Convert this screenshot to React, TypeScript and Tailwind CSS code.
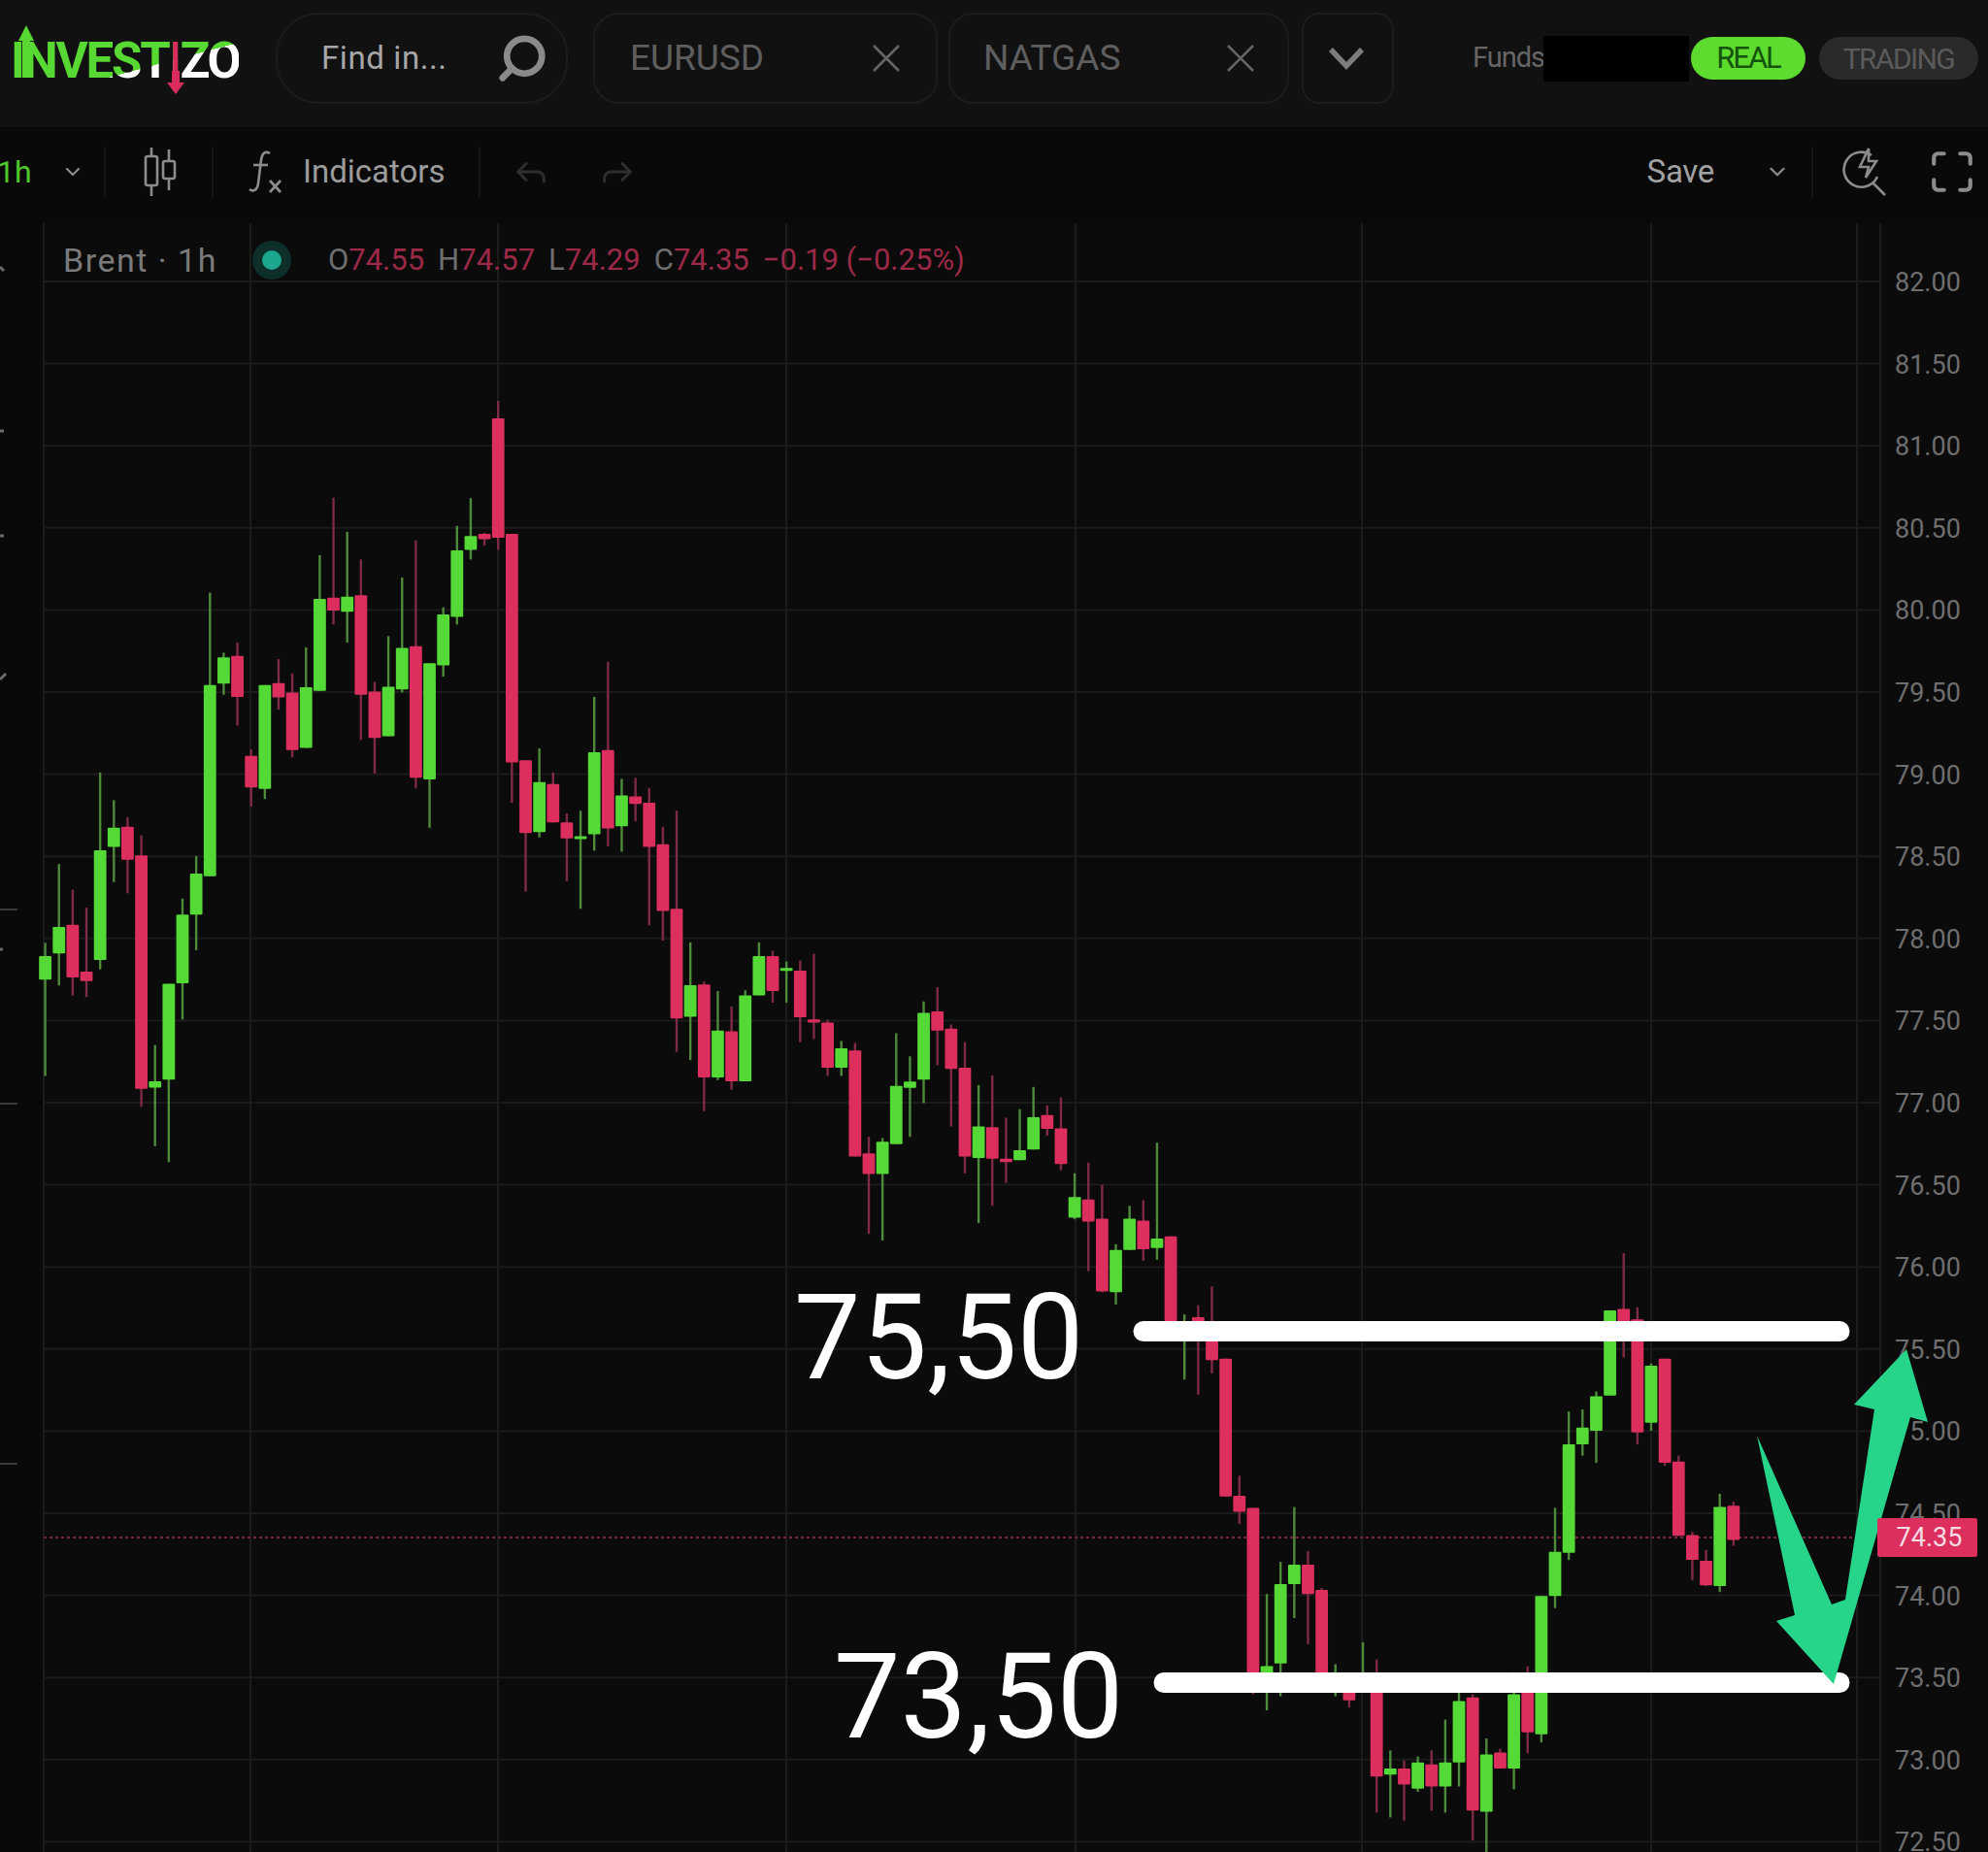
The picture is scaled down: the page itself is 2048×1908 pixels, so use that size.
import { ChevronDown, Forward, Maximize, Reply, Search } from 'lucide-react';

type Candle = [up: 0 | 1, wickTop: number, bodyTop: number, bodyBottom: number, wickBottom: number];

// ── Candles, read off the picture in three stretches, each with its own origin/scale
const LEFT: Candle[] = [
  [1, 1078, 1103, 1147, 1328], [1, 930, 1048, 1098, 1158], [0, 978, 1044, 1143, 1177], [0, 1012, 1132, 1150, 1180],
  [1, 758, 904, 1110, 1128], [1, 810, 862, 898, 964], [0, 842, 860, 922, 985], [0, 876, 914, 1352, 1386],
  [1, 1270, 1338, 1350, 1460], [1, 1155, 1155, 1335, 1490], [1, 995, 1025, 1154, 1222], [1, 915, 948, 1025, 1092],
  [1, 420, 594, 953, 953], [1, 533, 542, 591, 612], [0, 514, 539, 616, 670], [0, 715, 727, 786, 822],
  [1, 594, 594, 789, 808], [0, 545, 590, 617, 640], [0, 572, 608, 716, 730], [1, 523, 598, 712, 712],
  [1, 350, 432, 605, 605], [0, 242, 430, 454, 480], [1, 306, 428, 456, 514], [0, 358, 425, 612, 697],
  [0, 588, 606, 693, 760], [1, 502, 597, 690, 690], [1, 392, 524, 602, 608], [0, 322, 521, 768, 788],
  [1, 553, 553, 771, 862], [1, 448, 461, 557, 578], [1, 295, 341, 466, 480], [1, 243, 314, 340, 358],
  [0, 308, 310, 320, 332], [0, 60, 93, 317, 340], [0, 310, 310, 739, 815], [0, 735, 735, 872, 982],
  [1, 713, 776, 870, 880], [0, 758, 780, 852, 852], [0, 835, 852, 882, 962], [1, 830, 878, 882, 1014],
  [1, 616, 720, 874, 905], [0, 550, 716, 863, 897], [1, 770, 801, 859, 907], [0, 768, 803, 817, 850],
  [0, 787, 815, 898, 1045], [0, 860, 893, 1018, 1074], [0, 830, 1014, 1220, 1283],
];

const MID: Candle[] = [
  [1, 78, 190, 272, 385], [0, 180, 188, 430, 518], [1, 205, 308, 430, 437], [0, 245, 310, 440, 462],
  [1, 203, 216, 440, 440], [1, 78, 114, 216, 216], [0, 100, 114, 205, 235], [1, 128, 145, 150, 235],
  [0, 125, 152, 273, 338], [0, 108, 279, 287, 330], [0, 280, 287, 405, 426], [1, 335, 354, 405, 426],
  [0, 340, 360, 636, 636], [0, 585, 628, 682, 838], [1, 588, 598, 682, 855], [1, 315, 452, 604, 604],
  [1, 375, 441, 457, 585], [1, 232, 262, 436, 497], [0, 195, 258, 308, 398], [0, 292, 303, 408, 558],
  [0, 338, 405, 636, 680], [1, 450, 558, 640, 810], [0, 425, 560, 642, 765], [0, 535, 642, 651, 705],
  [1, 513, 620, 646, 646], [1, 455, 534, 618, 618], [0, 503, 528, 564, 582], [0, 482, 563, 656, 672],
  [1, 680, 742, 796, 800], [0, 652, 748, 806, 935], [0, 710, 798, 988, 990], [1, 865, 880, 990, 1022],
  [1, 765, 798, 880, 880], [0, 750, 803, 878, 908], [1, 600, 850, 875, 905],
];

const RIGHT: Candle[] = [
  [0, 33, 33, 270, 270], [1, 228, 260, 280, 390], [0, 205, 235, 290, 428], [0, 158, 250, 342, 375],
  [0, 338, 338, 682, 682], [0, 630, 680, 720, 750], [0, 710, 710, 1140, 1175], [1, 925, 1105, 1150, 1215],
  [1, 845, 900, 1098, 1180], [1, 708, 852, 900, 985], [0, 818, 852, 925, 1050], [0, 910, 915, 1125, 1125],
  [1, 1100, 1125, 1140, 1180], [0, 1130, 1150, 1190, 1208], [1, 1045, 1125, 1135, 1165], [0, 1088, 1125, 1380, 1470],
  [1, 1315, 1360, 1375, 1482], [0, 1340, 1360, 1400, 1490], [1, 1330, 1345, 1410, 1418], [0, 1315, 1350, 1405, 1465],
  [1, 1238, 1345, 1405, 1470], [1, 1165, 1192, 1345, 1405], [0, 1175, 1183, 1465, 1540], [1, 1285, 1325, 1468, 1568],
  [0, 1310, 1320, 1360, 1360], [1, 1120, 1175, 1360, 1412], [0, 1105, 1125, 1270, 1322], [1, 930, 930, 1275, 1295],
  [1, 710, 820, 930, 960], [1, 470, 552, 822, 840], [1, 465, 510, 552, 580], [1, 420, 432, 518, 598],
  [1, 218, 218, 430, 430], [0, 75, 214, 250, 335], [0, 210, 240, 522, 552], [1, 350, 356, 498, 518],
  [0, 338, 338, 598, 605], [0, 580, 595, 780, 780], [0, 770, 778, 840, 890], [0, 815, 842, 903, 905],
  [1, 675, 708, 905, 920], [0, 695, 705, 790, 805],
];

const fit = (rows: Candle[], origin: number, scale: number): Candle[] =>
  rows.map(([up, a, b, c, d]) => [up, origin + a / scale, origin + b / scale, origin + c / scale, origin + d / scale]);

const CANDLES = [...fit(LEFT, 380, 1.823), ...fit(MID, 940, 2.53), ...fit(RIGHT, 1260, 2.42)];

const PRICES = ['82.00', '81.50', '81.00', '80.50', '80.00', '79.50', '79.00', '78.50', '78.00', '77.50', '77.00', '76.50', '76.00', '75.50', '75.00', '74.50', '74.00', '73.50', '73.00', '72.50'];
const GRID_X = [45, 258, 513, 810, 1108, 1403, 1701, 1913];

function CloseIcon() {
  return (
    <svg width="30" height="30" viewBox="0 0 30 30" className="text-[#666666]">
      <path d="M2 2 28 28M28 2 2 28" stroke="currentColor" strokeWidth="2.6" />
    </svg>
  );
}

function Tab({ label, className }: { label: string; className: string }) {
  return (
    <div className={`${className} h-[94px] flex items-center justify-between rounded-[26px] border-2 border-[#1c1c1c]`}>
      <span className="text-[37px] text-[#5e5e5e] font-normal">{label}</span>
      <CloseIcon />
    </div>
  );
}

function Logo() {
  return (
    <div className="relative w-[270px] h-[94px] shrink-0">
      <svg width="30" height="60" viewBox="0 0 30 60" className="absolute left-[1px] top-[13px]">
        <path d="M12 0 20 16H16V54H8V16H4Z" fill="#58d832" />
      </svg>
      <span className="absolute -left-[3px] top-[20px] text-[51px] leading-[60px] font-bold tracking-[-2.2px] text-transparent bg-clip-text bg-[linear-gradient(165deg,#58d832_0%,#58d832_60%,#ffffff_60%,#ffffff_100%)]">
        INVEST<span className="text-[#d92c5c] font-normal">I</span>ZO
      </span>
      <svg width="20" height="24" viewBox="0 0 20 24" className="absolute left-[157px] top-[60px]">
        <path d="M6 0H14V12H19L10 24 1 12H6Z" fill="#d92c5c" />
      </svg>
    </div>
  );
}

function Header() {
  return (
    <header className="h-[131px] bg-[#111112] flex items-center pl-[14px] pb-[11px]">
      <Logo />
      <div className="w-[301px] h-[94px] flex items-center justify-between pl-[45px] pr-[18px] rounded-[44px] border-2 border-[#1c1c1c]">
        <span className="text-[33px] text-[#a6a6a6] tracking-[0.6px]">Find in...</span>
        <Search size={54} strokeWidth={3} className="-scale-x-100 text-[#8a8a8a]" />
      </div>
      <Tab label="EURUSD" className="ml-[26px] w-[355px] pl-[36px] pr-[36px]" />
      <Tab label="NATGAS" className="ml-[11px] w-[351px] pl-[34px] pr-[33px]" />
      <div className="ml-[13px] w-[95px] h-[94px] pr-[4px] flex items-center justify-center rounded-[18px] border-2 border-[#1c1c1c]">
        <svg width="38" height="24" viewBox="0 0 38 24" fill="none" className="text-[#7c7c7c]">
          <path d="M3 3 19 20 35 3" stroke="currentColor" strokeWidth="5.5" />
        </svg>
      </div>
      <span className="ml-[81px] text-[29px] tracking-[-1px] text-[#666666] w-[73px] overflow-hidden whitespace-nowrap">Funds</span>
      <div className="w-[150px] h-[47px] bg-black" />
      <div className="ml-[2px] w-[118px] h-[44px] rounded-full bg-[#5ddb2e] flex items-center justify-center text-[31px] tracking-[-2px] text-[#15540c]">REAL</div>
      <div className="ml-[14px] w-[164px] h-[44px] rounded-full bg-[#2a2a2a] flex items-center justify-center text-[30px] tracking-[-1.6px] text-[#5a5a5a]">TRADING</div>
    </header>
  );
}

function Divider({ className }: { className: string }) {
  return <div className={`w-[2px] h-[52px] bg-[#161616] shrink-0 ${className}`} />;
}

function Toolbar() {
  return (
    <div className="h-[99px] bg-[#090909] flex items-center overflow-hidden pb-[8px]">
      <span className="text-[32px] text-[#50c82c] w-[31px] -ml-[3px] shrink-0">1h</span>
      <ChevronDown size={24} strokeWidth={2.2} className="ml-[35px] text-[#8a8a8a]" />
      <Divider className="ml-[20px]" />
      <svg width="36" height="50" viewBox="0 0 36 50" fill="none" stroke="#8c8c8c" strokeWidth="2.6" className="ml-[38px]">
        <path d="M9 0V9M9 39V50M27 2V14M27 32V44" />
        <rect x="3" y="9" width="12" height="30" rx="2" />
        <rect x="21" y="14" width="12" height="18" rx="2" />
      </svg>
      <Divider className="ml-[35px]" />
      <svg width="36" height="44" viewBox="0 0 36 44" fill="none" stroke="#8c8c8c" strokeWidth="2.6" className="ml-[36px]">
        <path d="M22 3C17 0 14 3 13 10L10 34C9 41 5 43 1 40" />
        <path d="M5 15H20" />
        <path d="M22 31 33 43M33 31 22 43" />
      </svg>
      <span className="ml-[20px] text-[33px] text-[#9c9c9c] w-[152px] shrink-0">Indicators</span>
      <Divider className="ml-[29px]" />
      <Reply size={40} strokeWidth={1.8} className="ml-[32px] text-[#2e2e2e]" />
      <Forward size={40} strokeWidth={1.8} className="ml-[49px] text-[#2e2e2e]" />
      <span className="ml-auto text-[33px] text-[#a2a2a2] tracking-[-0.3px]">Save</span>
      <ChevronDown size={26} strokeWidth={2.2} className="ml-[52px] text-[#8a8a8a]" />
      <Divider className="ml-[22px]" />
      <svg width="46" height="50" viewBox="0 0 46 50" fill="none" stroke="#8c8c8c" strokeWidth="2.6" className="ml-[30px]">
        <path d="M30 8A18 18 0 1 0 36 30" />
        <path d="M31 36 44 49" />
        <path d="M27 1 18 20H27L24 31 35 14H27Z" />
      </svg>
      <Maximize size={50} strokeWidth={2} className="ml-[42px] mr-[12px] text-[#8c8c8c]" />
    </div>
  );
}

function ChartCanvas() {
  return (
    <svg width="1936" height="1678" viewBox="0 230 1936 1678" className="shrink-0 block">
      <rect x="0" y="230" width="45" height="1678" fill="#090909" />
      {PRICES.map((_, i) => (
        <line key={i} x1="45" x2="1936" y1={290 + i * 84.6} y2={290 + i * 84.6} stroke="#1b1b1c" strokeWidth="2" />
      ))}
      {GRID_X.map(x => (
        <line key={x} x1={x} x2={x} y1="230" y2="1908" stroke="#1c1c1d" strokeWidth="2" />
      ))}
      <path d="M0 937H18M0 1137H18M0 1508H18" stroke="#3a3a3a" strokeWidth="2" />
      <path d="M0 275 4 279M0 444H4M0 552H4M0 700 6 694M0 978H3" stroke="#6a6a6a" strokeWidth="3" />
      <line x1="45" x2="1936" y1="1584" y2="1584" stroke="#7a2340" strokeWidth="2" strokeDasharray="3 3" />
      {CANDLES.map(([up, wt, bt, bb, wb], i) => {
        const x = 46.6 + i * 14.14;
        return (
          <g key={i}>
            <line x1={x} x2={x} y1={wt} y2={wb} stroke={up ? '#4d8a3a' : '#7f2a45'} strokeWidth="2.4" />
            <rect x={x - 6.4} y={bt} width="12.8" height={Math.max(bb - bt, 3)} rx="1" fill={up ? '#55d936' : '#dc2f5e'} />
          </g>
        );
      })}
    </svg>
  );
}

function PriceAxis() {
  return (
    <div className="flex-1 h-[1678px] overflow-hidden pt-[19px] border-l-2 border-[#1c1c1d]">
      {PRICES.map(p => (
        <div key={p} className="h-[84.6px] flex items-center pl-[14px] text-[27px] text-[#6e6e6e]">{p}</div>
      ))}
    </div>
  );
}

function Legend() {
  return (
    <div className="absolute left-[65px] top-[20px] h-[36px] flex items-center whitespace-nowrap">
      <span className="text-[34px] text-[#7a7a7a] tracking-[1.5px]">Brent · 1h</span>
      <span className="ml-[36px] w-[40px] h-[40px] rounded-full bg-[#0e2e2a] flex items-center justify-center">
        <span className="w-[20px] h-[20px] rounded-full bg-[#1ca88f]" />
      </span>
      <span className="ml-[38px] text-[31px] text-[#6e6e6e]">
        O<span className="text-[#9c2947]">74.55</span>
        <span className="ml-[14px]">H</span><span className="text-[#9c2947]">74.57</span>
        <span className="ml-[14px]">L</span><span className="text-[#9c2947]">74.29</span>
        <span className="ml-[14px]">C</span><span className="text-[#9c2947]">74.35</span>
        <span className="ml-[14px] text-[#9c2947]">−0.19 (−0.25%)</span>
      </span>
    </div>
  );
}

function Annotations() {
  return (
    <>
      <svg width="2048" height="1678" viewBox="0 230 2048 1678" className="absolute left-0 top-0 pointer-events-none">
        <line x1="1178" x2="1895" y1="1371.5" y2="1371.5" stroke="#ffffff" strokeWidth="21" strokeLinecap="round" />
        <line x1="1199" x2="1895" y1="1733.5" y2="1733.5" stroke="#ffffff" strokeWidth="21" strokeLinecap="round" />
        <polygon
          points="1810,1479 1887,1653 1901,1648 1931,1452 1910,1447 1964,1390 1986,1465 1968,1460 1889,1735 1830,1670 1849,1664"
          fill="#26d48a"
        />
      </svg>
      <span className="absolute left-[818px] top-[1088px] text-[122px] leading-[122px] text-white">75,50</span>
      <span className="absolute left-[859px] top-[1458px] text-[122px] leading-[122px] text-white">73,50</span>
      <div className="absolute left-[1934px] top-[1334px] w-[103px] h-[40px] pl-[4px] rounded-[2px] bg-[#dc2f5e] flex items-center justify-center text-[27px] text-[#f6dbe2]">
        74.35
      </div>
    </>
  );
}

export default function App() {
  return (
    <div className="w-[2048px] h-[1908px] overflow-hidden bg-[#0b0b0c] font-['Roboto',sans-serif]">
      <Header />
      <Toolbar />
      <div className="relative flex h-[1678px]">
        <ChartCanvas />
        <PriceAxis />
        <Legend />
        <Annotations />
      </div>
    </div>
  );
}
